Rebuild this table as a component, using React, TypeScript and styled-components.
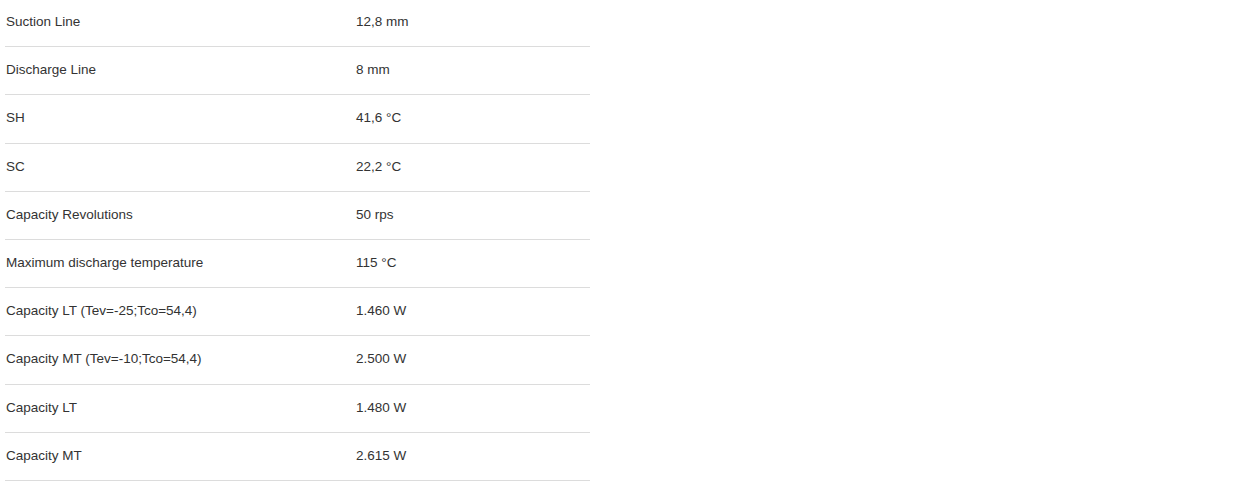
import React from "react";
import styled, { createGlobalStyle } from "styled-components";

const Global = createGlobalStyle`
  html, body { margin: 0; padding: 0; background: #fff; }
  body { font-family: "Liberation Sans", Arial, sans-serif; }
`;

const Table = styled.div`
  width: 585px;
  margin: -1px 0 0 5px;
  display: flex;
  flex-direction: column;
`;

const Row = styled.div`
  display: grid;
  grid-template-columns: 350px 1fr;
  align-items: center;
  height: 48.2px;
  box-sizing: border-box;
  border-bottom: 1px solid #dcdcdc;
  font-size: 13.5px;
  color: #333;
`;

const Cell = styled.div`
  padding-left: 1px;
  padding-bottom: 2px;
  white-space: nowrap;
`;

const rows: [string, string][] = [
  ["Suction Line", "12,8 mm"],
  ["Discharge Line", "8 mm"],
  ["SH", "41,6 °C"],
  ["SC", "22,2 °C"],
  ["Capacity Revolutions", "50 rps"],
  ["Maximum discharge temperature", "115 °C"],
  ["Capacity LT (Tev=-25;Tco=54,4)", "1.460 W"],
  ["Capacity MT (Tev=-10;Tco=54,4)", "2.500 W"],
  ["Capacity LT", "1.480 W"],
  ["Capacity MT", "2.615 W"],
];

export default function App() {
  return (
    <>
      <Global />
      <Table>
        {rows.map(([k, v]) => (
          <Row key={k}>
            <Cell>{k}</Cell>
            <Cell>{v}</Cell>
          </Row>
        ))}
      </Table>
    </>
  );
}
